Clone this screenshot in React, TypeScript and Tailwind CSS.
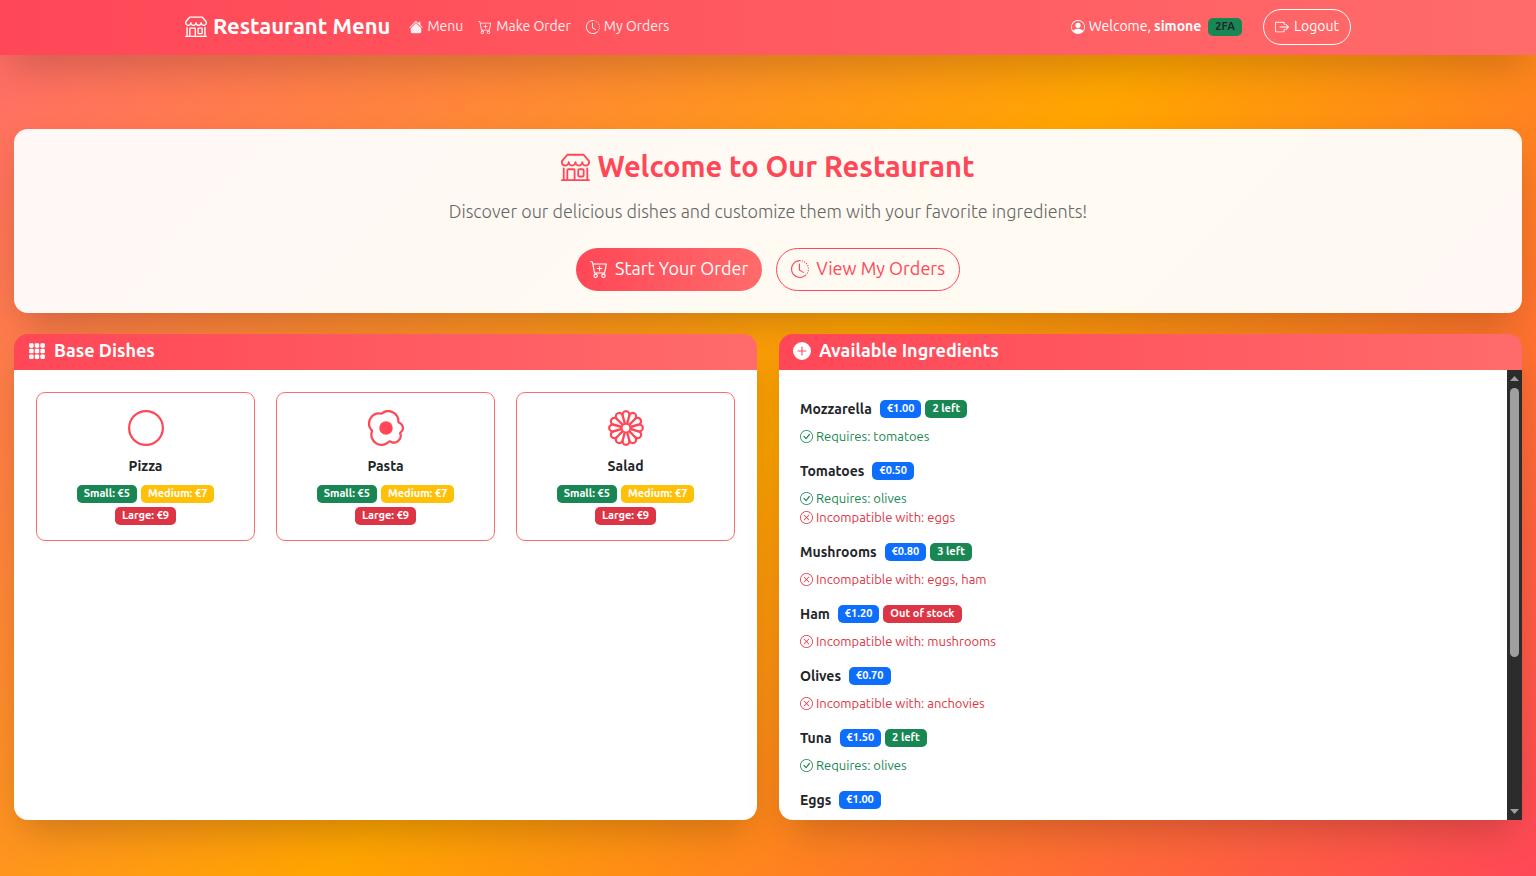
import { useState, type ReactNode, type UIEvent } from "react";
import {
  BsBoxArrowRight, BsCartPlus, BsCheckCircle, BsCircle, BsClockHistory, BsEggFried, BsFlower1,
  BsGrid3X3GapFill, BsHouseFill, BsPersonCircle, BsPlusCircleFill, BsShop, BsXCircle,
} from "react-icons/bs";
import type { IconType } from "react-icons";

type Tone = "green" | "yellow" | "red" | "blue";

const tones: Record<Tone, string> = {
  green: "bg-[#198754]",
  yellow: "bg-[#ffc107]",
  red: "bg-[#dc3545]",
  blue: "bg-[#0d6efd]",
};

function Badge({ tone, dark, children }: { tone: Tone; dark?: boolean; children: ReactNode }) {
  return (
    <span
      className={`inline-block rounded-[5px] px-[7px] pt-px pb-[3px] text-[11px] leading-[14px] font-bold whitespace-nowrap ${tones[tone]} ${dark ? "text-[#212529]" : "text-white"}`}
    >
      {children}
    </span>
  );
}

const dishes: { name: string; icon: IconType }[] = [
  { name: "Pizza", icon: BsCircle },
  { name: "Pasta", icon: BsEggFried },
  { name: "Salad", icon: BsFlower1 },
];

interface Ingredient {
  name: string;
  price: string;
  left?: number;
  requires?: string;
  incompatible?: string;
}

const ingredients: Ingredient[] = [
  { name: "Mozzarella", price: "€1.00", left: 2, requires: "tomatoes" },
  { name: "Tomatoes", price: "€0.50", requires: "olives", incompatible: "eggs" },
  { name: "Mushrooms", price: "€0.80", left: 3, incompatible: "eggs, ham" },
  { name: "Ham", price: "€1.20", left: 0, incompatible: "mushrooms" },
  { name: "Olives", price: "€0.70", incompatible: "anchovies" },
  { name: "Tuna", price: "€1.50", left: 2, requires: "olives" },
  { name: "Eggs", price: "€1.00", incompatible: "mushrooms, tomatoes" },
  { name: "Anchovies", price: "€1.50", left: 1, incompatible: "olives" },
];

function IngredientRow({ item }: { item: Ingredient }) {
  return (
    <li className="py-[7px]">
      <div className="flex h-[22px] items-center gap-[4px]">
        <h3 className="mr-[4px] text-[14px] leading-[22px] font-semibold">{item.name}</h3>
        <Badge tone="blue">{item.price}</Badge>
        {item.left === 0 && <Badge tone="red">Out of stock</Badge>}
        {!!item.left && <Badge tone="green">{item.left} left</Badge>}
      </div>
      <div className="mt-[7px] text-[13px] leading-[19px]">
        {item.requires && (
          <p className="flex items-center gap-[3px] text-[#198754]">
            <BsCheckCircle /> Requires: {item.requires}
          </p>
        )}
        {item.incompatible && (
          <p className="flex items-center gap-[3px] text-[#dc3545]">
            <BsXCircle /> Incompatible with: {item.incompatible}
          </p>
        )}
      </div>
    </li>
  );
}

const THUMB = 65;

function ScrollRail({ progress }: { progress: number }) {
  return (
    <div aria-hidden="true" className="flex w-[15px] shrink-0 flex-col items-center bg-[#2c2c2c] py-[6px]">
      <svg width="9" height="5" viewBox="0 0 9 5" fill="#9f9f9f"><path d="M4.5 0 9 5H0z" /></svg>
      <div className="my-[7px] flex w-[9px] flex-1 flex-col">
        <div style={{ height: `${(100 - THUMB) * progress}%` }} />
        <div className="rounded-full bg-[#9f9f9f]" style={{ height: `${THUMB}%` }} />
      </div>
      <svg width="9" height="5" viewBox="0 0 9 5" fill="#9f9f9f"><path d="M0 0h9L4.5 5z" /></svg>
    </div>
  );
}

function PanelHeader({ icon: Icon, children }: { icon: IconType; children: ReactNode }) {
  return (
    <h2 className="flex h-[36px] items-center gap-[8px] rounded-t-[14px] bg-linear-90/srgb from-[#ff4757] to-[#ff6b6b] px-[14px] pb-[4px] text-[18px] font-semibold text-white">
      <Icon className="mt-[2px]" /> {children}
    </h2>
  );
}

export default function App() {
  const [progress, setProgress] = useState(0);
  const onScroll = (e: UIEvent<HTMLDivElement>) => {
    const el = e.currentTarget;
    setProgress(el.scrollTop / Math.max(1, el.scrollHeight - el.clientHeight));
  };

  return (
    <div className="min-h-screen bg-linear-135/srgb from-[#ff6b6b] via-[#ffa500] to-[#ff4757] pb-[56px] font-['Ubuntu','Noto_Sans',sans-serif] text-[#212529]">
      <nav className="bg-linear-90/srgb from-[#ff4757] to-[#ff6b6b] text-white shadow-[0_18px_40px_-9px_rgba(0,0,0,0.22)]">
        <div className="mx-auto flex h-[55px] max-w-[1188px] items-center px-[11px] pb-[2px]">
          <a href="#home" className="flex items-center gap-[6px] pb-[2px] text-[22px] font-semibold">
            <BsShop /> Restaurant Menu
          </a>
          <div className="ml-[19px] flex items-center gap-[15px] text-[14px] text-white/90">
            <a href="#menu" className="flex items-center gap-[4px]"><BsHouseFill /> Menu</a>
            <a href="#order" className="flex items-center gap-[4px]"><BsCartPlus /> Make Order</a>
            <a href="#orders" className="flex items-center gap-[4px]"><BsClockHistory /> My Orders</a>
          </div>
          <div className="ml-auto flex items-center text-[14px]">
            <BsPersonCircle className="mr-[4px]" />
            <span className="mr-[7px]">Welcome, <strong className="font-bold">simone</strong></span>
            <Badge tone="green" dark>2FA</Badge>
            <button type="button" className="ml-[21px] flex h-[36px] items-center gap-[5px] rounded-full border border-white px-[11px]">
              <BsBoxArrowRight /> Logout
            </button>
          </div>
        </div>
      </nav>

      <main className="px-[14px] pt-[74px]">
        <section className="flex flex-col items-center rounded-[14px] bg-white/95 p-[22px] text-center shadow-[0_18px_40px_-9px_rgba(0,0,0,0.22)]">
          <h1 className="flex items-center gap-[7px] text-[29px] leading-[30px] font-semibold text-[#ff4757]">
            <BsShop /> Welcome to Our Restaurant
          </h1>
          <p className="mt-[16px] text-[18px] leading-[28px] font-light text-[#666666]">
            Discover our delicious dishes and customize them with your favorite ingredients!
          </p>
          <div className="mt-[23px] flex gap-[14px] text-[18px]">
            <button type="button" className="flex h-[43px] items-center gap-[7px] rounded-full bg-linear-90/srgb from-[#ff4757] to-[#ff6b6b] px-[14px] pb-[2px] text-white">
              <BsCartPlus /> Start Your Order
            </button>
            <button type="button" className="flex h-[43px] items-center gap-[7px] rounded-full border border-[#ff4757] px-[14px] pb-[2px] text-[#ff4757]">
              <BsClockHistory /> View My Orders
            </button>
          </div>
        </section>

        <div className="mt-[21px] grid grid-cols-2 gap-[22px]">
          <section className="flex flex-col rounded-[14px] shadow-[0_18px_40px_-9px_rgba(0,0,0,0.22)]">
            <PanelHeader icon={BsGrid3X3GapFill}>Base Dishes</PanelHeader>
            <div className="grid flex-1 grid-cols-3 items-start gap-[21px] rounded-b-[14px] bg-white p-[22px]">
              {dishes.map(({ name, icon: Icon }) => (
                <article key={name} className="flex flex-col items-center rounded-[9px] border border-[#ff6b6b] px-[14px] pt-[17px] pb-[15px]">
                  <Icon className="text-[36px] text-[#ff4757]" />
                  <h3 className="mt-[12px] text-[14px] leading-[17px] font-semibold">{name}</h3>
                  <div className="mt-[10px] flex flex-wrap justify-center gap-[4px]">
                    <Badge tone="green">Small: €5</Badge>
                    <Badge tone="yellow">Medium: €7</Badge>
                    <Badge tone="red">Large: €9</Badge>
                  </div>
                </article>
              ))}
            </div>
          </section>

          <section className="rounded-[14px] shadow-[0_18px_40px_-9px_rgba(0,0,0,0.22)]">
            <PanelHeader icon={BsPlusCircleFill}>Available Ingredients</PanelHeader>
            <div className="flex h-[450px] overflow-hidden rounded-bl-[14px] bg-white">
              <div onScroll={onScroll} className="flex-1 overflow-y-auto p-[21px] [scrollbar-width:none]">
                <ul>
                  {ingredients.map((item) => <IngredientRow key={item.name} item={item} />)}
                </ul>
              </div>
              <ScrollRail progress={progress} />
            </div>
          </section>
        </div>
      </main>
    </div>
  );
}
